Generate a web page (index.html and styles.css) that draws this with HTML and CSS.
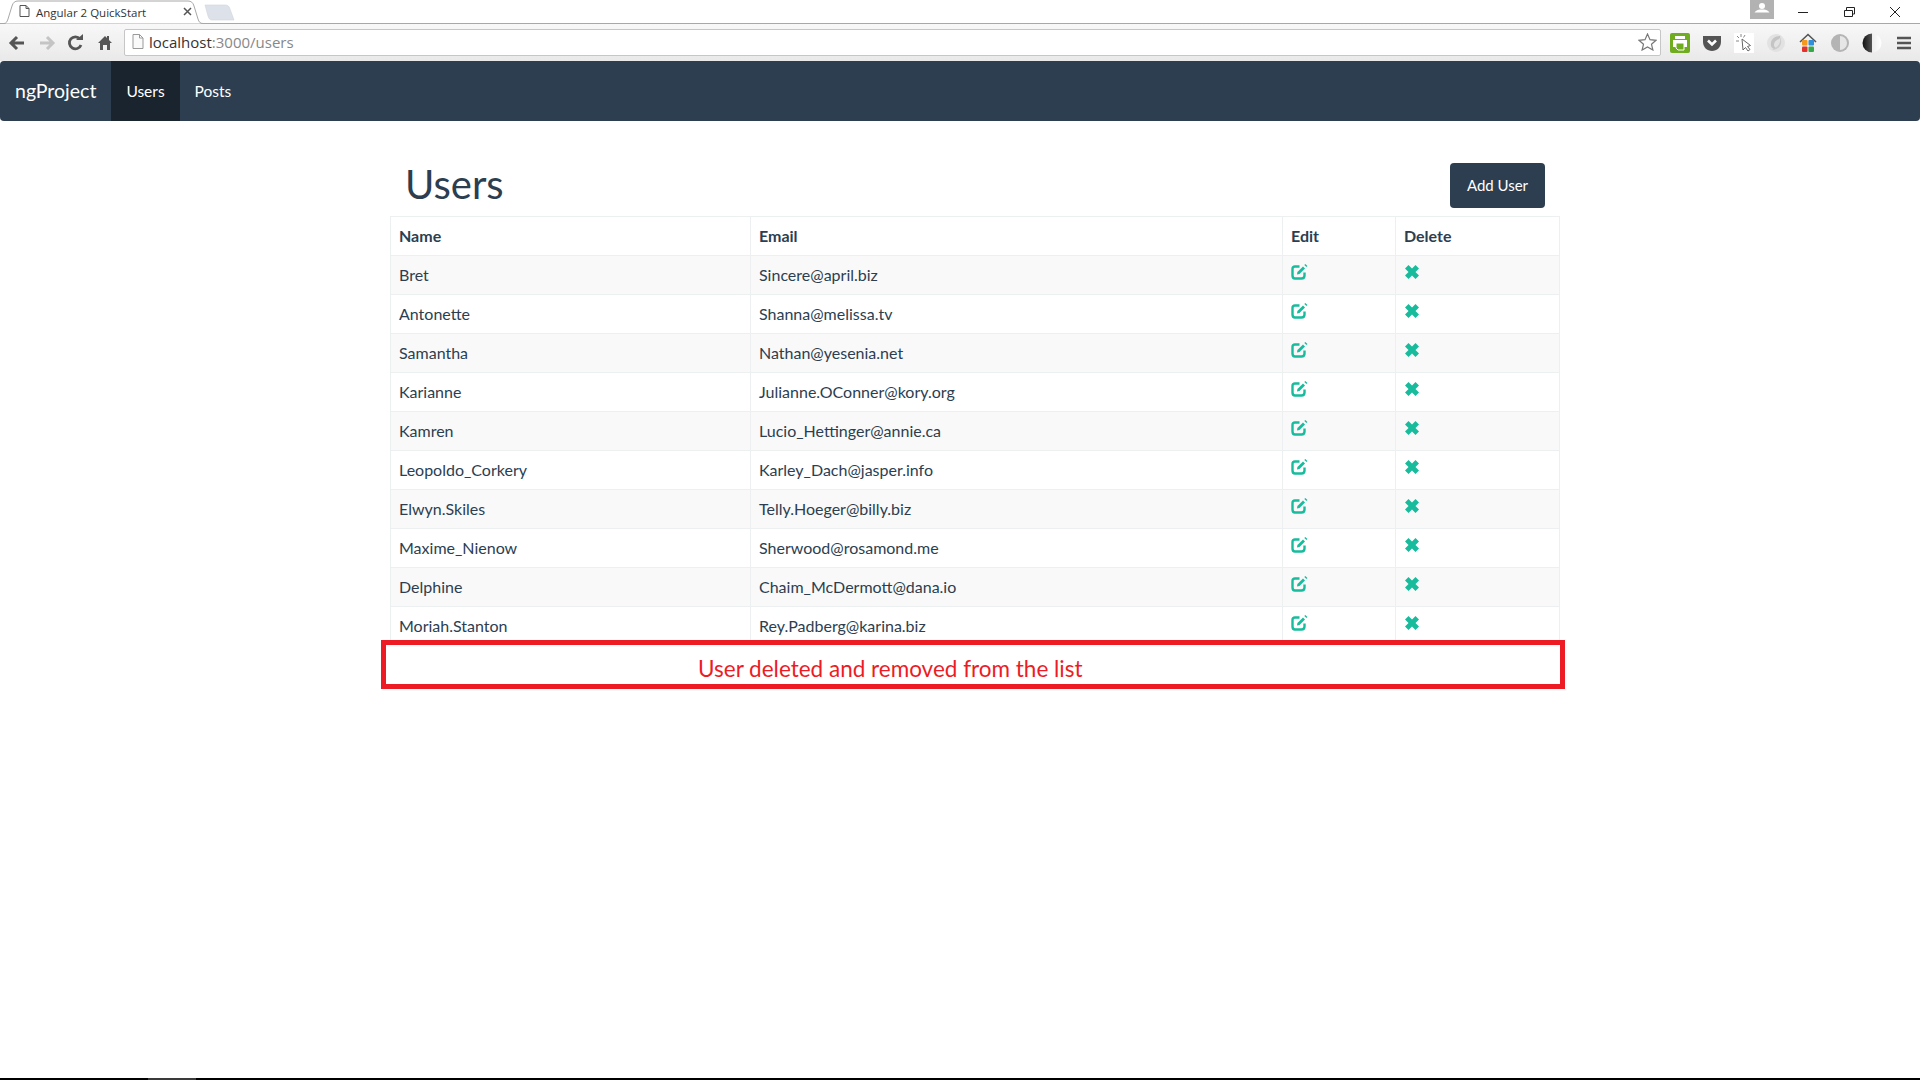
FILE: index.html
```html
<!DOCTYPE html>
<html>
<head>
<meta charset="UTF-8">
<title>Angular 2 QuickStart</title>
<link rel="stylesheet" href="styles.css">
</head>
<body>

<svg width="0" height="0" class="defs">
<symbol id="edit" viewBox="0 0 17 16">
<path d="M8.500 2.500H4Q1.500 2.500 1.500 5V11.500Q1.500 14.500 4 14.500H10.500Q13.500 14.500 13.500 11.500V8.500" fill="none" stroke="currentColor" stroke-width="2.400"/>
<path d="M6 10.500L6.400 8L12 2.400L14 4.400L8.500 10Z" fill="currentColor"/>
<path d="M13.300 1L14.300 0L16.500 2L15.500 3Z" fill="currentColor"/>
</symbol>
<symbol id="remove" viewBox="0 0 14 14">
<path d="M3.500 0L7 3.500L10.500 0L14 3.500L10.500 7L14 10.500L10.500 14L7 10.500L3.500 14L0 10.500L3.500 7L0 3.500Z" fill="currentColor"/>
</symbol>
</svg>

<div class="tabstrip">
<svg class="tabshape" width="240" height="24" viewBox="0 0 240 24">
<path d="M0 23.500H4C6 23.500 7 22 8 19L12 6C13 2.500 15 1 18 1H188C191 1 193 2.500 194 6L198 19C199 22 200 23.500 203 23.500H240" fill="#fff" stroke="#a8a8a8"/>
<path d="M205 5H225C228 5 229 6 230 9L234 20H212C210 20 209 19 208 16Z" fill="#dde2ea" stroke="#d0d4da" stroke-width="0.600"/>
<path d="M20 5.500H26L29 8.500V16.500H20Z M26 5.500V8.500H29" fill="#fff" stroke="#555"/>
<path d="M184 8L191 15M191 8L184 15" stroke="#555" stroke-width="1.500"/>
</svg>
<span class="tabtitle">Angular 2 QuickStart</span>
<div class="winbtns">
<div class="avatar">
<svg width="24" height="19" viewBox="0 0 24 19"><circle cx="12" cy="6" r="3" fill="#fff"/><path d="M4.500 12.500C6 10 9 9.500 12 9.500C15 9.500 18 10 19.500 12.500Z" fill="#fff"/></svg>
</div>
<svg class="winicon" width="46" height="24" viewBox="0 0 46 24"><path d="M18 12.500H28" stroke="#222"/></svg>
<svg class="winicon" width="46" height="24" viewBox="0 0 46 24"><path d="M18.500 10.500H26.500V16.500H18.500ZM20.500 10V7.500H28.500V14H27" fill="none" stroke="#222"/></svg>
<svg class="winicon" width="46" height="24" viewBox="0 0 46 24"><path d="M18 7L28 17M28 7L18 17" stroke="#222"/></svg>
</div>
</div>

<div class="toolbar">
<svg class="navicons" width="112" height="36" viewBox="0 0 112 36">
<path d="M24 18H12M17 12L11 18L17 24" fill="none" stroke="#555" stroke-width="3"/>
<path d="M40 18H52M47 12L53 18L47 24" fill="none" stroke="#c4c4c4" stroke-width="3"/>
<path d="M80 14A6 6 0 1 0 81 20" fill="none" stroke="#555" stroke-width="2.800"/>
<path d="M76 15H83V9Z" fill="#555"/>
<path d="M98 18L105 11L107 13V11H109V15L112 18H110V25H107V20H103V25H100V18Z" fill="#555"/>
</svg>
<div class="urlbar">
<svg width="12" height="15" viewBox="0 0 12 15" class="pageicon"><path d="M1 .5H7.500L11 4V14.500H1Z M7.500 .5V4H11" fill="#fafafa" stroke="#999"/></svg>
<span class="host">localhost</span><span class="urlrest">:3000/users</span>
<svg class="star" width="19" height="18" viewBox="0 0 19 18"><path d="M9.500 1L12 6.700L18 7.300L13.500 11.300L14.900 17L9.500 14L4.100 17L5.500 11.300L1 7.300L7 6.700Z" fill="#fff" stroke="#777" stroke-width="1.200"/></svg>
</div>
<div class="exts">
<svg width="20" height="20" viewBox="0 0 20 20"><rect width="20" height="20" rx="2" fill="#6fac1f"/><path d="M3 7H17V14H3Z" fill="#fff"/><path d="M5 3H15V6H5Z" fill="#fff"/><path d="M6 10H14V17H8L6 15Z" fill="#6fac1f" stroke="#fff"/></svg>
<svg width="20" height="20" viewBox="0 0 20 20"><path d="M1 3H19V9C19 14 15 18 10 18C5 18 1 14 1 9Z" fill="#555"/><path d="M6 7.500L10 11.500L14 7.500" fill="none" stroke="#fff" stroke-width="2.600"/></svg>
<svg width="20" height="20" viewBox="0 0 20 20"><rect width="20" height="20" fill="#fff"/><path d="M8 6L9 17L11.500 14.500L14 18L16 16.500L13.500 13.500L16.500 12.500Z" fill="#fff" stroke="#666"/><path d="M7 1V4M3 3L5 5M2 8H5M11 2L9.500 4.500" stroke="#888"/></svg>
<svg width="20" height="20" viewBox="0 0 20 20"><circle cx="10" cy="10" r="9" fill="#e2e2e2"/><path d="M14 3C8 3 4 7 5 13C6 16 9 17 11 15C7 15 7 9 11 7C13 6 15 5 14 3Z" fill="#c4c4c4"/><path d="M6 17C12 17 16 13 15 7C15 5 14 5 14 5C15 10 12 14 6 17Z" fill="#cdcdcd"/></svg>
<svg width="20" height="20" viewBox="0 0 20 20"><path d="M2 9L10 1.500L18 9" fill="none" stroke="#555" stroke-width="1.600"/><rect x="4" y="7" width="5.500" height="5.500" rx="1" fill="#f39a1e"/><rect x="10.500" y="7" width="5.500" height="5.500" rx="1" fill="#2f8fd8"/><rect x="4" y="13.500" width="5.500" height="5.500" rx="1" fill="#e2322b"/><rect x="10.500" y="13.500" width="5.500" height="5.500" rx="1" fill="#35a84a"/></svg>
<svg width="20" height="20" viewBox="0 0 20 20"><circle cx="10" cy="10" r="9" fill="#b4b4b4"/><path d="M10 3A7 7 0 0 1 10 17Z" fill="#e6e6e6"/></svg>
<svg width="20" height="20" viewBox="0 0 20 20"><defs><linearGradient id="half" x1="0" x2="1"><stop offset="0" stop-color="#111"/><stop offset="0.500" stop-color="#555"/><stop offset="0.510" stop-color="#eee"/><stop offset="1" stop-color="#fff"/></linearGradient></defs><circle cx="10" cy="10" r="9.500" fill="url(#half)"/></svg>
<svg class="menuicon" width="14" height="20" viewBox="0 0 14 20"><path d="M0 5H14M0 10H14M0 15H14" stroke="#555" stroke-width="2.600"/></svg>
</div>
</div>

<nav class="navbar">
<a class="brand">ngProject</a>
<a class="navlink active">Users</a>
<a class="navlink">Posts</a>
</nav>

<main class="content">
<div class="heading">
<h1>Users</h1>
<button class="addbtn">Add User</button>
</div>

<table class="users">
<thead>
<tr><th class="c-name">Name</th><th class="c-email">Email</th><th class="c-edit">Edit</th><th>Delete</th></tr>
</thead>
<tbody>
<tr><td>Bret</td><td>Sincere@april.biz</td><td><svg class="ico-edit"><use href="#edit"/></svg></td><td><svg class="ico-del"><use href="#remove"/></svg></td></tr>
<tr><td>Antonette</td><td>Shanna@melissa.tv</td><td><svg class="ico-edit"><use href="#edit"/></svg></td><td><svg class="ico-del"><use href="#remove"/></svg></td></tr>
<tr><td>Samantha</td><td>Nathan@yesenia.net</td><td><svg class="ico-edit"><use href="#edit"/></svg></td><td><svg class="ico-del"><use href="#remove"/></svg></td></tr>
<tr><td>Karianne</td><td>Julianne.OConner@kory.org</td><td><svg class="ico-edit"><use href="#edit"/></svg></td><td><svg class="ico-del"><use href="#remove"/></svg></td></tr>
<tr><td>Kamren</td><td>Lucio_Hettinger@annie.ca</td><td><svg class="ico-edit"><use href="#edit"/></svg></td><td><svg class="ico-del"><use href="#remove"/></svg></td></tr>
<tr><td>Leopoldo_Corkery</td><td>Karley_Dach@jasper.info</td><td><svg class="ico-edit"><use href="#edit"/></svg></td><td><svg class="ico-del"><use href="#remove"/></svg></td></tr>
<tr><td>Elwyn.Skiles</td><td>Telly.Hoeger@billy.biz</td><td><svg class="ico-edit"><use href="#edit"/></svg></td><td><svg class="ico-del"><use href="#remove"/></svg></td></tr>
<tr><td>Maxime_Nienow</td><td>Sherwood@rosamond.me</td><td><svg class="ico-edit"><use href="#edit"/></svg></td><td><svg class="ico-del"><use href="#remove"/></svg></td></tr>
<tr><td>Delphine</td><td>Chaim_McDermott@dana.io</td><td><svg class="ico-edit"><use href="#edit"/></svg></td><td><svg class="ico-del"><use href="#remove"/></svg></td></tr>
<tr><td>Moriah.Stanton</td><td>Rey.Padberg@karina.biz</td><td><svg class="ico-edit"><use href="#edit"/></svg></td><td><svg class="ico-del"><use href="#remove"/></svg></td></tr>
</tbody>
</table>

<div class="notice">User deleted and removed from the list</div>
</main>

<div class="taskbar"><span class="taskthumb"></span></div>

</body>
</html>
```

FILE: styles.css
```css
*{
box-sizing: border-box;
margin: 0; padding: 0;
}

html, body{
height: 100%;
}

body{
background: #fff;
color: #2c3e50;
font: 16px "Lato", sans-serif;
display: flex;
flex-direction: column;
overflow: hidden;
}

.defs{
display: block;
height: 0;
}

/* browser chrome */
.tabstrip{
height: 24px;
display: flex;
flex: none;
position: relative;
border-bottom: 1px solid #a8a8a8;
}

.tabshape{
flex: none;
}

.tabtitle{
position: absolute;
left: 36px;
top: 5px;
font: 11.500px "Open Sans", sans-serif;
color: #333;
}

.winbtns{
margin-left: auto;
display: flex;
align-items: flex-start;
padding-right: 2px;
}

.avatar{
width: 24px;
height: 19px;
background: #b2b2b2;
margin-right: 6px;
}

.toolbar{
height: 37px;
flex: none;
display: flex;
align-items: center;
background: linear-gradient(#f8f8f8, #e9e9e9);
}

.navicons{
flex: none;
margin-right: 12px;
}

.urlbar{
width: 1537px;
height: 27px;
flex: none;
background: #fff;
border: 1px solid #c6c6c6;
border-radius: 2px;
display: flex;
align-items: center;
padding: 0 0 2px 7px;
font: 15px "Open Sans", sans-serif;
}

.pageicon{
margin-right: 5px;
}

.host{
color: #333;
}

.urlrest{
color: #888;
}

.star{
margin-left: auto;
margin-right: 3px;
}

.exts{
display: flex;
align-items: center;
gap: 12px;
margin-left: 9px;
}

.menuicon{
margin-left: 3px;
}

/* app */
.navbar{
height: 60px;
flex: none;
background: #2c3e50;
border-radius: 4px;
display: flex;
align-items: stretch;
color: #fff;
}

.brand{
font-size: 19.500px;
line-height: 60px;
padding: 0 15px;
}

.navlink{
font-size: 15.500px;
line-height: 60px;
padding: 0 15px;
}

.active{
background: #1a242f;
}

.content{
width: 1170px;
margin-left: 390px;
}

.heading{
height: 95px;
padding: 42px 15px 0 15px;
display: flex;
justify-content: space-between;
align-items: flex-start;
}

h1{
font-size: 40px;
font-weight: 400;
line-height: 43px;
}

.addbtn{
width: 95px;
height: 45px;
padding-bottom: 2px;
background: #2c3e50;
color: #fff;
border: none;
border-radius: 4px;
font: 15px "Lato", sans-serif;
}

.users{
width: 1170px;
border-collapse: collapse;
table-layout: fixed;
}

.users th, .users td{
height: 39px;
padding: 8px;
border: 1px solid #ecf0f1;
text-align: left;
vertical-align: top;
line-height: 22px;
font-size: 16px;
}

.users th{
font-weight: 700;
}

.c-name{
width: 360px;
}

.c-email{
width: 532px;
}

.c-edit{
width: 113px;
}

.users tbody tr:nth-child(odd){
background: #f9f9f9;
}

.ico-edit, .ico-del{
display: block;
color: #18bc9c;
}

.ico-edit{
width: 17px;
height: 16px;
}

.ico-del{
width: 14px;
height: 14px;
margin: 1px 0 0 1px;
}

/* red annotation lies over the last table border */
.notice{
position: relative;
width: 1184px;
height: 49px;
margin: -6px 0 0 -9px;
border: 5px solid #ed1c24;
color: #ed1c24;
font-size: 22.500px;
line-height: 41px;
padding: 3px 0 0 312px;
background: #fff;
}

.taskbar{
margin-top: auto;
height: 2px;
flex: none;
background: #000;
}

.taskthumb{
display: block;
width: 48px;
height: 2px;
margin-left: 148px;
background: #3a3a3a;
}
```
